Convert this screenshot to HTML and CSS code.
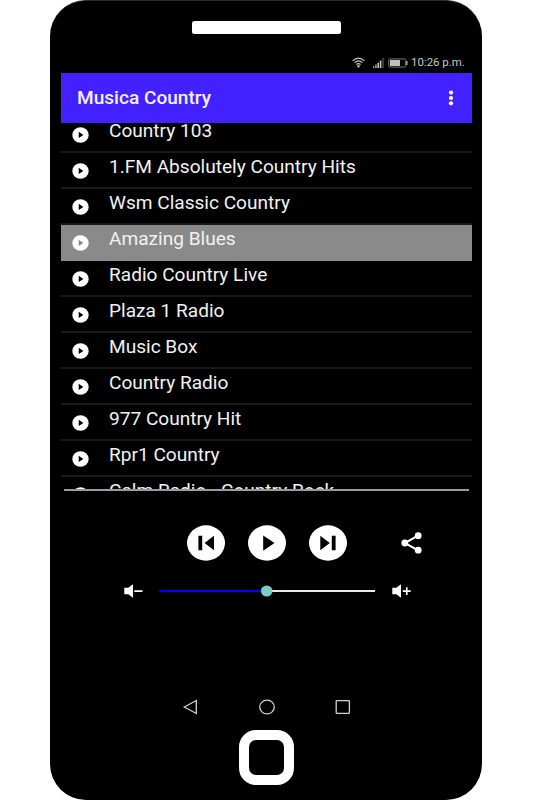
FILE: index.html
```html
<!DOCTYPE html>
<html lang="en">
<head>
<meta charset="utf-8">
<title>Musica Country</title>
<link rel="stylesheet" href="styles.css">
</head>
<body>
<svg class="defs" width="0" height="0" aria-hidden="true">
  <symbol id="play" viewBox="0 0 17 16"><ellipse cx="8.5" cy="8" rx="8.2" ry="7.7" fill="#fff"/><path fill="currentColor" d="M6.700 4.800v6.200L11.400 8z"/></symbol>
</svg>
<main class="phone">
  <div class="speaker"></div>
  <div class="screen">
    <div class="status">
      <svg class="wifi" width="13" height="11" viewBox="0 0 13 11" fill="none" stroke="#c4c4c4" stroke-width="1.1"><path d="M.6 3.800Q6.500-1.600 12.400 3.800M2.500 5.700Q6.500 2 10.500 5.700M4.400 7.500Q6.500 5.800 8.600 7.500"/><circle cx="6.500" cy="9.300" r=".7" fill="#c4c4c4"/></svg>
      <svg class="signal" width="11" height="10" viewBox="0 0 11 10"><path d="M.2 8h1v2h-1zM2.300 6.500h1.300V10H2.300zM4.500 4.700h1.500V10H4.500zM6.800 2.500h1.600V10H6.800z" fill="#c4c4c4"/><path d="M9.300 0h1.500v10H9.300z" fill="#484848"/></svg>
      <svg class="battery" width="20" height="10" viewBox="0 0 20 10"><rect x=".8" y=".9" width="16.800" height="8.200" rx="1.200" fill="none" stroke="#777"/><rect x="2" y="2" width="10" height="6" fill="#c0c0c0"/><path d="M18.200 3h1.300v4h-1.300z" fill="#bbb"/></svg>
      <span class="time">10:26 p.m.</span>
    </div>
    <header class="appbar">
      <h1>Musica Country</h1>
      <svg width="6" height="16" viewBox="0 0 6 16" fill="#fff"><circle cx="3" cy="2.600" r="2.100"/><circle cx="3" cy="8" r="2.100"/><circle cx="3" cy="13.300" r="2.100"/></svg>
    </header>
    <div class="listwrap">
      <ul class="list">
        <li><svg><use href="#play"/></svg><span>Country 103</span></li>
        <li><svg><use href="#play"/></svg><span>1.FM Absolutely Country Hits</span></li>
        <li><svg><use href="#play"/></svg><span>Wsm Classic Country</span></li>
        <li class="selected"><svg><use href="#play"/></svg><span>Amazing Blues</span></li>
        <li><svg><use href="#play"/></svg><span>Radio Country Live</span></li>
        <li><svg><use href="#play"/></svg><span>Plaza 1 Radio</span></li>
        <li><svg><use href="#play"/></svg><span>Music Box</span></li>
        <li><svg><use href="#play"/></svg><span>Country Radio</span></li>
        <li><svg><use href="#play"/></svg><span>977 Country Hit</span></li>
        <li><svg><use href="#play"/></svg><span>Rpr1 Country</span></li>
        <li><svg><use href="#play"/></svg><span>Calm Radio - Country Rock</span></li>
      </ul>
    </div>
    <div class="rule"></div>
    <div class="controls">
      <svg width="38" height="36" viewBox="0 0 38 36"><ellipse cx="19" cy="18" rx="19" ry="17.700" fill="#fff"/><path d="M11.400 10.800h3.800v14.400h-3.800zM27 10.800v14.400L17.600 18z"/></svg>
      <svg width="38" height="36" viewBox="0 0 38 36"><ellipse cx="19" cy="18" rx="19" ry="17.700" fill="#fff"/><path d="M15.200 10.500v15.300L26.500 18z"/></svg>
      <svg width="38" height="36" viewBox="0 0 38 36"><ellipse cx="19" cy="18" rx="19" ry="17.700" fill="#fff"/><path d="M11.300 10.800v14.400l9.500-7.200zM22.800 10.800h3.800v14.400h-3.800z"/></svg>
      <svg class="share" width="21" height="22" viewBox="0 0 21 22" fill="#fff"><path d="M17 3.700 3.800 11 17 18.300" fill="none" stroke="#fff" stroke-width="2"/><circle cx="17.200" cy="3.700" r="3.400"/><circle cx="3.800" cy="11" r="3.400"/><circle cx="17.200" cy="18.200" r="3.400"/></svg>
    </div>
    <div class="volume">
      <svg width="19" height="14" viewBox="0 0 19 14" fill="#fff"><path d="M.3 3.800h4L9 .200v13.600l-4.700-3.600h-4zM10.300 6.200H18.500v1.700H10.300z"/></svg>
      <svg class="slider" width="216" height="12" viewBox="0 0 216 12"><path d="M0 6h108" stroke="#00f" stroke-width="2"/><path d="M108 6h108" stroke="#e8e8e8" stroke-width="2"/><ellipse cx="107.700" cy="6" rx="5.800" ry="5.500" fill="#80cbc4"/></svg>
      <svg width="19" height="14" viewBox="0 0 19 14" fill="#fff"><path d="M.3 3.800h4L9 .200v13.600l-4.700-3.600h-4zM10.800 6.200h3.100V3.200h1.700v3h3.100v1.700h-3.100v3h-1.700v-3h-3.100z"/></svg>
    </div>
    <nav class="nav">
      <svg width="16" height="16" viewBox="0 0 16 16"><path d="M13.300 1.500v13L1.200 8z"/></svg>
      <svg width="16" height="16" viewBox="0 0 16 16"><ellipse cx="8" cy="8" rx="7.300" ry="6.900"/></svg>
      <svg width="16" height="16" viewBox="0 0 16 16"><rect x="1.200" y="1.700" width="13.200" height="12.600" rx=".5"/></svg>
    </nav>
  </div>
  <div class="home"></div>
</main>
</body>
</html>
```
FILE: styles.css
```css
* { box-sizing: border-box; }
body { margin: 0; background: #fff; font-family: Roboto, "Liberation Sans", sans-serif; color: #fff; }
svg { display: block; flex: none; }
.defs { position: absolute; }
.phone { width: 432.300px; height: 799.500px; margin-left: 50px; background: #000; border-radius: 36px; display: flex; flex-direction: column; border-top: 1px solid #2a2a2a; overflow: hidden; }
.speaker { width: 149px; height: 13px; margin: 20px 0 0 141.700px; border-radius: 2.500px; background: #fff; flex: none; }
.screen { width: 411px; margin-left: 11.300px; flex: none; }
.status { height: 39px; padding: 18px 0 0 290.700px; display: flex; align-items: center; color: #c8c8c8; }
.signal { margin-left: 8px; }
.battery { margin-left: 4px; }
.time { font-size: 11px; line-height: 14px; margin: 1px 0 0 3.300px; white-space: nowrap; transform: scaleX(1.040); transform-origin: left; }
.appbar { height: 49.500px; background: #4320ff; display: flex; align-items: center; justify-content: space-between; padding: 0 18px 0 16px; }
h1 { margin: 1px 0 0; font-size: 17.500px; line-height: 22px; font-weight: 500; color: #f4f0ff; white-space: nowrap; transform: scaleX(1.090); transform-origin: left; }
.listwrap { height: 366.500px; overflow: hidden; }
.list { list-style: none; margin: -5.500px 0 0; padding: 0; }
.list li { height: 36px; display: flex; align-items: flex-start; padding: 10px 0 0 11px; border-bottom: 2px solid #191919; }
.list svg { width: 17px; height: 16px; color: #000; }
.list span { margin: -7px 0 0 20px; font-size: 17.500px; line-height: 22px; color: #f2f2f2; white-space: nowrap; transform: scaleX(1.090); transform-origin: left; }
.list .selected { background: #8a8a8a; border-color: #8a8a8a; }
.list .selected svg { color: #8a8a8a; }
.rule { height: 1.500px; margin: 0 3px; background: #9a9a9a; }
.controls { height: 36px; margin: 34.500px 0 0 125.700px; display: flex; align-items: center; gap: 23px; }
.share { margin-left: 31px; }
.volume { display: flex; align-items: center; margin: 23px 0 0 62.500px; height: 14px; }
.slider { margin: 0 17px 0 16.500px; }
.nav { display: flex; gap: 60px; margin: 101px 0 0 121.800px; fill: none; stroke: #d2d2d2; stroke-width: 1.300; }
.home { width: 55px; height: 55px; border: 10px solid #fff; border-radius: 17px; margin: 15px 0 0 189px; flex: none; }
```
